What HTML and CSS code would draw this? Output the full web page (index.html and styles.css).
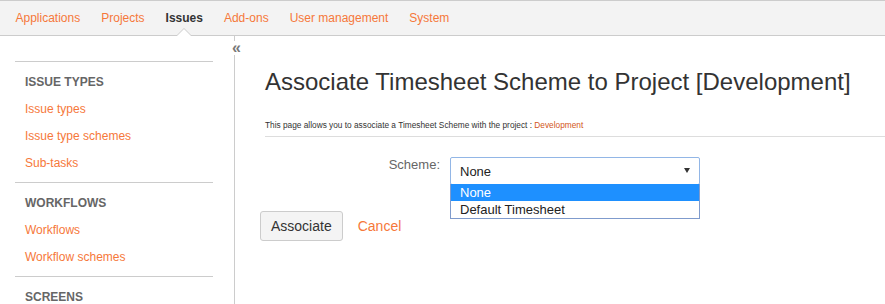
FILE: index.html
```html
<!DOCTYPE html>
<html>
<head>
  <title>Associate Timesheet Scheme</title>
  <link rel="stylesheet" href="styles.css">
</head>
<body>
  <header class="topnav">
    <ul>
      <li><a href="#">Applications</a></li>
      <li><a href="#">Projects</a></li>
      <li><a href="#" class="active">Issues</a></li>
      <li><a href="#">Add-ons</a></li>
      <li><a href="#">User management</a></li>
      <li><a href="#">System</a></li>
    </ul>
  </header>

  <div class="layout">
    <aside class="sidebar">
      <span class="collapse">&laquo;</span>

      <section class="side-group">
        <h3>Issue types</h3>
        <a href="#">Issue types</a>
        <a href="#">Issue type schemes</a>
        <a href="#">Sub-tasks</a>
      </section>

      <section class="side-group">
        <h3>Workflows</h3>
        <a href="#">Workflows</a>
        <a href="#">Workflow schemes</a>
      </section>

      <section class="side-group">
        <h3>Screens</h3>
      </section>
    </aside>

    <main class="content">
      <div class="page-header">
        <h1>Associate Timesheet Scheme to Project [Development]</h1>
        <p class="description">This page allows you to associate a Timesheet Scheme with the project : <a href="#">Development</a></p>
      </div>

      <form class="assoc-form">
        <div class="field">
          <label>Scheme:</label>
          <div class="select">
            <span>None</span>
            <span class="arrow"></span>
            <ul class="options">
              <li class="selected">None</li>
              <li>Default Timesheet</li>
            </ul>
          </div>
        </div>

        <div class="buttons">
          <button type="button">Associate</button>
          <a href="#" class="cancel">Cancel</a>
        </div>
      </form>
    </main>
  </div>
</body>
</html>
```

FILE: styles.css
```css
/* page */
body {
  font-family: "Liberation Sans", Arial, sans-serif;
  margin: 0;
  color: #333;
  background: #fff;
  overflow: hidden;
}
a {
  color: #f6783a;
  text-decoration: none;
}

/* top navigation */
.topnav {
  background: #f3f3f3;
  border-top: 1px solid #ccc;
  border-bottom: 1px solid #ccc;
}
.topnav ul {
  list-style: none;
  margin: 0;
  padding: 0 0 0 5px;
  display: flex;
}
.topnav a {
  display: block;
  position: relative;
  font-size: 12px;
  line-height: 34px;
  padding: 0 10.5px;
}
.topnav a.active {
  color: #333;
  font-weight: bold;
}
/* little notch under the active item */
.topnav a.active::before,
.topnav a.active::after {
  content: "";
  position: absolute;
  left: 50%;
  bottom: -1px;
  width: 0;
  height: 0;
  border-style: solid;
  border-color: transparent;
}
.topnav a.active::before {
  margin-left: -8px;
  border-width: 0 8px 8px 8px;
  border-bottom-color: #ccc;
}
.topnav a.active::after {
  margin-left: -7px;
  border-width: 0 7px 7px 7px;
  border-bottom-color: #fff;
}

/* layout */
.layout {
  display: flex;
  height: 268px;
}

/* sidebar */
.sidebar {
  position: relative;
  width: 198px;
  padding: 25px 21px 0 15px;
  border-right: 1px solid #ccc;
  flex-shrink: 0;
}
.collapse {
  position: absolute;
  top: 5px;
  right: -7px;
  background: #fff;
  color: #777;
  font-size: 16px;
  font-weight: bold;
  line-height: 14px;
}
.side-group {
  border-top: 1px solid #ccc;
  padding: 12px 0 5px 10px;
}
.side-group h3 {
  margin: 0 0 5px;
  font-size: 12px;
  line-height: 17px;
  text-transform: uppercase;
  color: #666;
}
.side-group a {
  display: block;
  font-size: 12px;
  line-height: 27px;
}

/* main content */
.content {
  flex: 1;
  padding: 31px 0 0 25px;
}
.page-header {
  margin-left: 5px;
  border-bottom: 1px solid #ddd;
  padding-bottom: 4px;
}
.page-header h1 {
  margin: 0;
  font-size: 24px;
  font-weight: normal;
  line-height: 30px;
  color: #333;
}
.description {
  margin: 21px 0 0;
  font-size: 8.3px;
  line-height: 14px;
}
.description a {
  color: #d2561a;
}

/* form */
.assoc-form {
  margin-top: 20px;
}
.field {
  display: flex;
}
.field label {
  width: 180px;
  margin-right: 10px;
  text-align: right;
  font-size: 13px;
  line-height: 16px;
  color: #666;
}
.select {
  position: relative;
  width: 230px;
  height: 26px;
  padding: 0 9px;
  border: 1px solid #92b6e6;
  border-radius: 2px;
  display: flex;
  align-items: center;
  justify-content: space-between;
  font-size: 13px;
  color: #222;
}
.arrow {
  width: 0;
  height: 0;
  margin-top: -1px;
  border-style: solid;
  border-width: 5px 3.5px 0 3.5px;
  border-color: #333 transparent transparent transparent;
}
.options {
  position: absolute;
  top: 100%;
  left: -1px;
  width: 248px;
  margin: 0;
  padding: 0;
  list-style: none;
  background: #fff;
  border: 1px solid #7f9bcd;
  border-top: none;
  z-index: 2;
}
.options li {
  padding-left: 9px;
  line-height: 17px;
  font-size: 13px;
}
.options li.selected {
  background: #1e90ff;
  color: #fff;
}
.buttons {
  margin-top: 26px;
  display: flex;
  align-items: center;
}
.buttons button {
  height: 30px;
  padding: 0 10px;
  font-family: inherit;
  font-size: 14px;
  color: #333;
  background: #f4f4f4;
  border: 1px solid #ccc;
  border-radius: 3px;
}
.cancel {
  margin-left: 15px;
  font-size: 14px;
}
```
